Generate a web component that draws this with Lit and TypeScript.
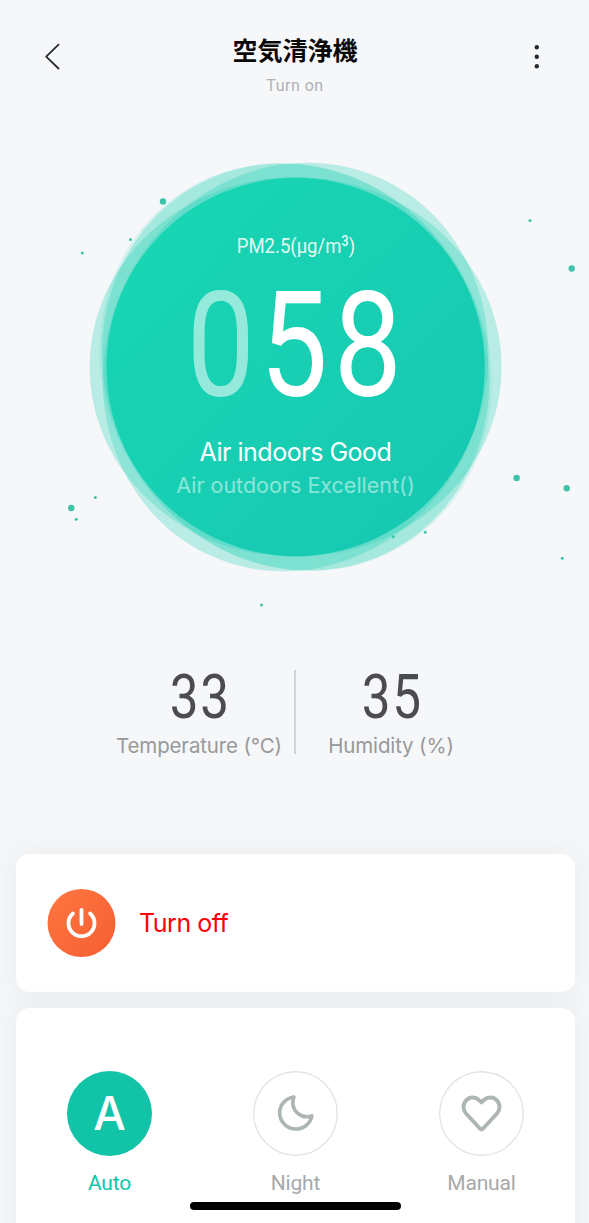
import { LitElement, html, css, svg } from "lit";
import { customElement, property } from "lit/decorators.js";

type Mode = "auto" | "night" | "manual";

// x, y, radius in stage coordinates
const PARTICLES = [
  [163, 61.5, 3.2],
  [130.5, 99.5, 1.5],
  [82.3, 113, 1.5],
  [530, 80.5, 1.5],
  [571.7, 128.5, 3.2],
  [71.3, 368, 3.2],
  [95.3, 357.5, 1.5],
  [76.2, 379.3, 1.5],
  [516.6, 338, 3.2],
  [566.7, 348.3, 3.2],
  [425.2, 392.2, 1.5],
  [393.3, 396.8, 1.5],
  [562.3, 418.2, 1.5],
  [261.5, 465, 1.6],
];

// rx, ry, rotation, opacity
const HALOS = [
  [208.5, 191, -122, 0.13],
  [207, 190, -117, 0.27],
  [207, 190, -66, 0.27],
  [206, 190, 0, 0.27],
];

@customElement("air-gauge")
export class AirGauge extends LitElement {
  static override styles = css`
    :host {
      display: grid;
      height: 480px;
      color: #fff;
    }
    .stage,
    .readout {
      grid-area: 1 / 1;
    }
    .stage {
      display: block;
      width: 100%;
      height: 480px;
    }
    .readout {
      display: flex;
      flex-direction: column;
      align-items: center;
      padding: 92px 0 0 2px;
      z-index: 1;
    }
    .unit {
      height: 28px;
      font: 400 20px/28px Roboto, sans-serif;
      color: rgba(255, 255, 255, 0.9);
      white-space: nowrap;
      transform: scaleX(0.925);
    }
    .unit sup {
      font-size: 14px;
      font-weight: 500;
      line-height: 0;
      vertical-align: 7px;
    }
    .value {
      display: grid;
      grid-template-columns: repeat(3, 73.6px);
      margin: 12px 3px 0 0;
      height: 150px;
      font: 400 146px/150px Roboto, sans-serif;
    }
    .digit {
      display: flex;
      justify-content: center;
      transform: scaleX(0.83);
    }
    .digit.leading {
      opacity: 0.54;
    }
    .indoors {
      margin-top: 15px;
      font: 400 25px/30px Inter, sans-serif;
      letter-spacing: -0.48px;
    }
    .outdoors {
      margin-top: 3px;
      font: 400 21.5px/30px Inter, sans-serif;
      opacity: 0.5;
    }
  `;

  @property({ type: Number }) value = 58;
  @property({ type: String }) indoors = "Good";
  @property({ type: String }) outdoors = "Excellent";

  private _renderDigits() {
    const digits = String(this.value).padStart(3, "0").split("");
    const lead = 3 - String(this.value).length;
    return digits.map(
      (d, i) => html`<span class="digit ${i < lead ? "leading" : ""}">${d}</span>`
    );
  }

  override render() {
    return html`
      <svg class="stage" viewBox="0 0 589 480">
        <defs>
          <linearGradient id="fill" x1="0" y1="0" x2="1" y2="1">
            <stop offset="0.1" stop-color="#18d6b3"></stop>
            <stop offset="0.9" stop-color="#17c8b2"></stop>
          </linearGradient>
        </defs>
        ${HALOS.map(
          ([rx, ry, angle, opacity]) => svg`
            <ellipse
              cx="295.6" cy="227" rx=${rx} ry=${ry}
              fill="#16d0b0" fill-opacity=${opacity}
              transform="rotate(${angle} 295.6 227)"
            ></ellipse>`
        )}
        <circle cx="295.6" cy="227" r="189.2" fill="url(#fill)"></circle>
        ${PARTICLES.map(
          ([x, y, r]) => svg`<circle cx=${x} cy=${y} r=${r} fill="#3fc2aa"></circle>`
        )}
      </svg>
      <div class="readout">
        <div class="unit">PM2.5(μg/m<sup>3</sup>)</div>
        <div class="value">${this._renderDigits()}</div>
        <div class="indoors">Air indoors ${this.indoors}</div>
        <div class="outdoors">Air outdoors ${this.outdoors}()</div>
      </div>
    `;
  }
}

@customElement("mode-button")
export class ModeButton extends LitElement {
  static override styles = css`
    :host {
      display: flex;
      flex-direction: column;
      align-items: center;
      width: 85px;
    }
    .disc {
      display: block;
      width: 85px;
      height: 85px;
    }
    .letter {
      font: 500 46.5px "Inter", sans-serif;
    }
    .label {
      margin-top: 13px;
      font: 400 21px/28px Roboto, sans-serif;
      letter-spacing: -0.2px;
      color: #a7a8a9;
    }
    .label.active {
      color: #11c4a8;
    }
  `;

  @property({ type: String }) mode: Mode = "auto";
  @property({ type: String }) label = "";
  @property({ type: Boolean }) active = false;

  private _renderIcon() {
    switch (this.mode) {
      case "auto":
        return svg`<text class="letter" x="43" y="59.3" text-anchor="middle" fill="#fff">A</text>`;
      case "night":
        return svg`
          <path
            d="M41.3 26.3C33.3 27.5 27 34 27 42.3C27 51.5 34.3 58.7 43.2 58.7C51.5 58.7 58.3 53 59.6 45.3C49.5 49 36.8 40.5 41.3 26.3Z"
            fill="none" stroke="#adb5b5" stroke-width="3.7" stroke-linejoin="round"
          ></path>`;
      case "manual":
        return svg`
          <path
            d="M43 31.8L40.6 29.4C36.8 25.9 31 26 27.5 29.6C23.9 33.3 23.9 39 27.4 43L41.6 58.4Q43 59.8 44.4 58.4L58.6 43C62.1 39 62.1 33.3 58.5 29.6C55 26 49.2 25.9 45.4 29.4Z"
            fill="none" stroke="#adb5b5" stroke-width="4" stroke-linejoin="round"
          ></path>`;
    }
  }

  override render() {
    return html`
      <svg class="disc" viewBox="0 0 86 86">
        <circle
          cx="43" cy="43" r=${this.active ? 43 : 42.3}
          fill=${this.active ? "#11c4a8" : "#fff"}
          stroke=${this.active ? "none" : "#e3e5e5"}
          stroke-width="1.4"
        ></circle>
        ${this._renderIcon()}
      </svg>
      <div class="label ${this.active ? "active" : ""}">${this.label}</div>
    `;
  }
}

@customElement("app-root")
export class AppRoot extends LitElement {
  static override styles = css`
    :host {
      position: relative;
      display: flex;
      flex-direction: column;
      height: 1223px;
      overflow: hidden;
      background: #f6f7f9;
      font-family: Inter, sans-serif;
    }
    header {
      display: grid;
      grid-template-columns: 80px 1fr 80px;
      height: 140px;
      flex: none;
    }
    .nav {
      display: block;
      width: 80px;
      height: 100px;
    }
    .heading {
      display: flex;
      flex-direction: column;
      align-items: center;
      padding: 31px 0 0 1px;
    }
    h1 {
      margin: 0;
      font: 700 25px/36px "Noto Sans CJK JP", sans-serif;
      color: #0a0a0a;
    }
    .status {
      margin-top: 9px;
      font: 400 16px/20px Roboto, sans-serif;
      letter-spacing: 0.5px;
      color: #b0b1b3;
    }
    .climate {
      display: flex;
      justify-content: center;
      margin-top: 50px;
      padding-left: 1px;
      height: 84px;
      flex: none;
    }
    .metric {
      width: 190px;
      display: flex;
      flex-direction: column;
      align-items: center;
    }
    .number {
      height: 54px;
      font: 400 61px/54px Roboto, sans-serif;
      letter-spacing: 2px;
      color: #4b4c51;
      transform: translateX(1px) scaleX(0.84);
    }
    .caption {
      margin-top: 7px;
      font-size: 20.5px;
      line-height: 30px;
      letter-spacing: -0.15px;
      color: #98999b;
      white-space: nowrap;
    }
    .rule {
      width: 2px;
      background: #d3d5d6;
    }
    .card {
      margin: 0 14px 0 16px;
      border-radius: 14px;
      background: #fff;
      box-shadow: 0 0 32px rgba(70, 85, 75, 0.08);
      flex: none;
    }
    .power {
      display: flex;
      align-items: center;
      gap: 23px;
      margin-top: 100px;
      padding-left: 31px;
      height: 138px;
      font-size: 25px;
      letter-spacing: -0.5px;
      color: #fb0007;
    }
    .power svg {
      display: block;
      width: 69px;
      height: 69px;
    }
    .modes {
      display: flex;
      justify-content: space-between;
      align-items: flex-start;
      margin-top: 16px;
      padding: 63px 51px 0 51px;
      height: 220px;
    }
    .home-bar {
      position: absolute;
      left: 190px;
      bottom: 13px;
      width: 211px;
      height: 8px;
      border-radius: 4px;
      background: #000;
    }
  `;

  @property({ type: Number }) temperature = 33;
  @property({ type: Number }) humidity = 35;
  @property({ type: String }) mode: Mode = "auto";

  private _renderMetric(value: number, caption: string) {
    return html`
      <div class="metric">
        <div class="number">${value}</div>
        <div class="caption">${caption}</div>
      </div>
    `;
  }

  private _renderMode(mode: Mode, label: string) {
    return html`
      <mode-button .mode=${mode} .label=${label} .active=${this.mode === mode}></mode-button>
    `;
  }

  override render() {
    return html`
      <header>
        <svg class="nav" viewBox="0 0 80 100" fill="none" stroke="#292a2b" stroke-width="1.8" stroke-linecap="round" stroke-linejoin="round">
          <path d="M58.5 44.7L46.2 56.6L58.5 68.5"></path>
        </svg>
        <div class="heading">
          <h1>空気清浄機</h1>
          <div class="status">Turn on</div>
        </div>
        <svg class="nav" viewBox="0 0 80 100" fill="#292a2b">
          <circle cx="27.8" cy="47.2" r="2.2"></circle>
          <circle cx="27.8" cy="56.7" r="2.2"></circle>
          <circle cx="27.8" cy="66.2" r="2.2"></circle>
        </svg>
      </header>

      <air-gauge></air-gauge>

      <section class="climate">
        ${this._renderMetric(this.temperature, "Temperature (°C)")}
        <div class="rule"></div>
        ${this._renderMetric(this.humidity, "Humidity (%)")}
      </section>

      <section class="card power">
        <svg viewBox="0 0 69 69">
          <defs>
            <linearGradient id="orange" x1="0" y1="0" x2="1" y2="1">
              <stop offset="0.1" stop-color="#fe743f"></stop>
              <stop offset="0.9" stop-color="#f66134"></stop>
            </linearGradient>
          </defs>
          <circle cx="34.5" cy="34" r="34" fill="url(#orange)"></circle>
          <g fill="none" stroke="#fff" stroke-width="3.8" stroke-linecap="round">
            <path d="M34.5 21V35"></path>
            <path d="M25.9 24.5A13 13 0 1 0 43.1 24.5"></path>
          </g>
        </svg>
        <span>Turn off</span>
      </section>

      <section class="card modes">
        ${this._renderMode("auto", "Auto")}
        ${this._renderMode("night", "Night")}
        ${this._renderMode("manual", "Manual")}
      </section>

      <div class="home-bar"></div>
    `;
  }
}

declare global {
  interface HTMLElementTagNameMap {
    "app-root": AppRoot;
    "air-gauge": AirGauge;
    "mode-button": ModeButton;
  }
}
